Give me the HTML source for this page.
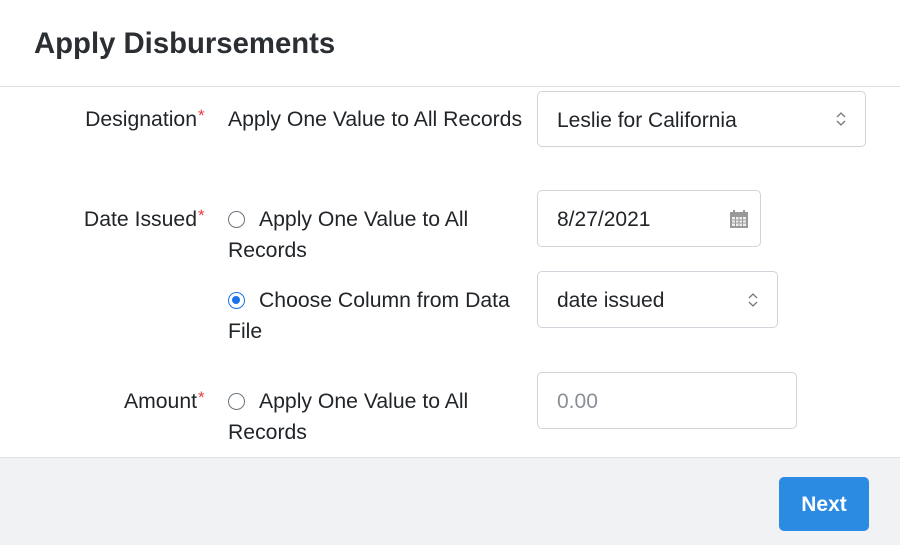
<!DOCTYPE html>
<html><head><meta charset="utf-8"><style>
*{box-sizing:border-box;margin:0;padding:0}
body{width:900px;height:545px;position:relative;background:#fff;font-family:"Liberation Sans",sans-serif;color:#212529;overflow:hidden}
.a{position:absolute;white-space:nowrap}
h1{position:absolute;left:34px;top:27px;font-size:29.3px;font-weight:bold;color:#2b2f33}
.t{font-size:21.2px;line-height:31px}
.lab{position:absolute;right:703px;text-align:right;font-size:21.2px;line-height:31px}
.lab span{color:#e53e3e;position:absolute;left:100%;top:-4px;font-size:17px;margin-left:1px}
.in{position:absolute;border:1px solid #ced4da;border-radius:5px;background:#fff;font-size:21px;padding-left:19px;padding-top:3px;display:flex;align-items:center}
.r{position:absolute;width:17px;height:17px;border:1px solid #6c757d;border-radius:50%;left:228px}
.r.on{border:1.5px solid #1a73e8}
.r.on::after{content:"";position:absolute;left:3px;top:3px;width:8px;height:8px;border-radius:50%;background:#1a73e8}
.ch{position:absolute;right:18px;top:50%;transform:translateY(-50%)}
</style></head><body>
<h1>Apply Disbursements</h1>
<div class="a" style="left:0;top:86px;width:900px;border-top:1px solid #dee2e6"></div>

<div class="lab" style="top:104px">Designation<span>*</span></div>
<div class="a t" style="left:228px;top:104px">Apply One Value to All Records</div>
<div class="in" style="left:537px;top:91px;width:329px;height:56px">Leslie for California<svg class="ch" width="12" height="20" viewBox="0 0 12 20"><path d="M2 8l4-4 4 4M2 12l4 4 4-4" fill="none" stroke="#777" stroke-width="1.3"/></svg></div>

<div class="lab" style="top:204px">Date Issued<span>*</span></div>
<div class="r" style="top:211px"></div>
<div class="a t" style="left:259px;top:204px">Apply One Value to All</div>
<div class="a t" style="left:228px;top:235px">Records</div>
<div class="in" style="left:537px;top:190px;width:224px;height:57px">8/27/2021<svg class="ch" style="right:11px" width="20" height="20" viewBox="0 0 20 20"><rect x="1" y="3" width="18" height="16" fill="#999"/><rect x="4" y="1" width="2" height="4" fill="#999"/><rect x="14" y="1" width="2" height="4" fill="#999"/><g fill="#eee"><rect x="3" y="8" width="14" height="9"/></g><path d="M3 11h14M3 14h14M6.5 8v9M10 8v9M13.5 8v9" stroke="#999" stroke-width="1"/></svg></div>

<div class="r on" style="top:292px"></div>
<div class="a t" style="left:259px;top:285px">Choose Column from Data</div>
<div class="a t" style="left:228px;top:316px">File</div>
<div class="in" style="left:537px;top:271px;width:241px;height:57px">date issued<svg class="ch" width="12" height="20" viewBox="0 0 12 20"><path d="M2 8l4-4 4 4M2 12l4 4 4-4" fill="none" stroke="#777" stroke-width="1.3"/></svg></div>

<div class="lab" style="top:386px">Amount<span>*</span></div>
<div class="r" style="top:393px"></div>
<div class="a t" style="left:259px;top:386px">Apply One Value to All</div>
<div class="a t" style="left:228px;top:417px">Records</div>
<div class="in" style="left:537px;top:372px;width:260px;height:57px;color:#8a9097">0.00</div>

<div class="a" style="left:0;top:457px;width:900px;height:88px;background:#f1f2f4;border-top:1px solid #dee2e6"></div>
<div class="a" style="left:779px;top:477px;width:90px;height:54px;background:#2b8ae2;border-radius:5px;color:#fff;font-size:21px;font-weight:bold;display:flex;align-items:center;justify-content:center;padding-top:2px">Next</div>
</body></html>
